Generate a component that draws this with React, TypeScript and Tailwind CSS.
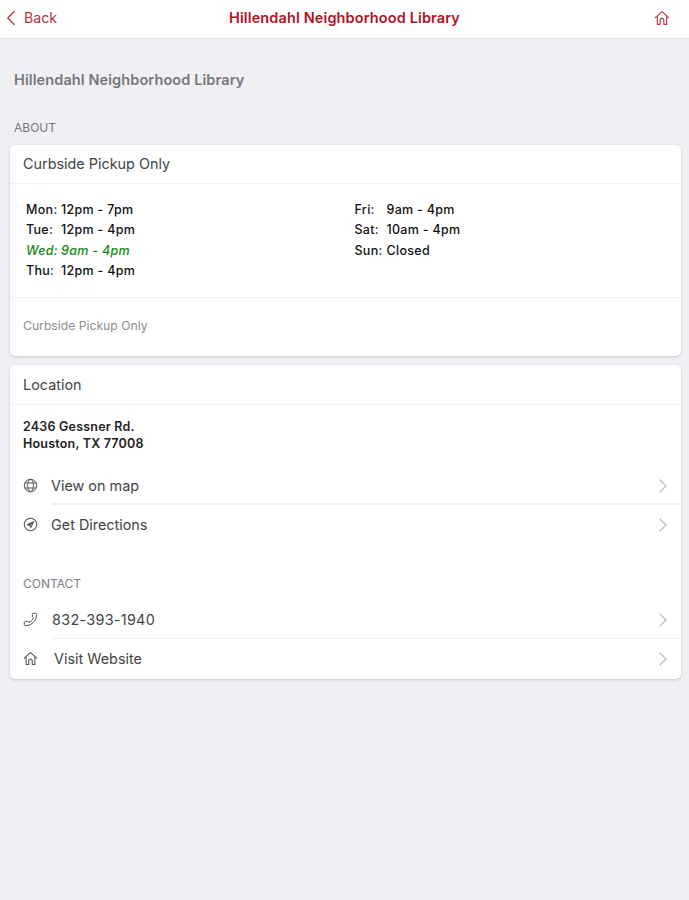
import { ChevronLeft, ChevronRight, Phone } from "lucide-react";

const leftHours = [
  { day: "Mon:", time: "12pm - 7pm" },
  { day: "Tue:", time: "12pm - 4pm" },
  { day: "Wed:", time: "9am - 4pm", today: true },
  { day: "Thu:", time: "12pm - 4pm" },
];

const rightHours = [
  { day: "Fri:", time: "9am - 4pm" },
  { day: "Sat:", time: "10am - 4pm" },
  { day: "Sun:", time: "Closed" },
];

function HomeIcon({ className }: { className?: string }) {
  return (
    <svg className={className} viewBox="0 0 24 24" fill="none" stroke="currentColor" strokeWidth="1.8" strokeLinejoin="round" strokeLinecap="round">
      <path d="M2 11.5 L12 2.5 L22 11.5" />
      <path d="M5 9.5 V21.5 H9.2 V15.5 a2.8 2.8 0 0 1 5.6 0 V21.5 H19 V9.5" />
    </svg>
  );
}

function GlobeIcon({ className }: { className?: string }) {
  return (
    <svg className={className} viewBox="0 0 24 24" fill="none" stroke="currentColor" strokeWidth="1.6">
      <circle cx="12" cy="12" r="10" />
      <ellipse cx="12" cy="12" rx="4.6" ry="10" />
      <path d="M3 8 H21 M3 16 H21" />
    </svg>
  );
}

function DirectionsIcon({ className }: { className?: string }) {
  return (
    <svg className={className} viewBox="0 0 24 24" fill="none" stroke="currentColor" strokeWidth="1.7">
      <circle cx="12" cy="12" r="10" />
      <path d="M17 7.5 L7 12.2 L11 13.2 L12.5 17 Z" strokeLinejoin="round" />
      <path d="M15.5 8.5 L8.5 12 L11.5 12.8 Z" fill="currentColor" />
    </svg>
  );
}

function HoursRow({ day, time, today, dayWidth }: { day: string; time: string; today?: boolean; dayWidth: string }) {
  return (
    <div className={`flex h-[20.5px] items-center text-[12.5px] font-medium tracking-[0.3px] ${today ? "italic text-[#138a13]" : "text-[#111]"}`}>
      <span className={dayWidth}>{day}</span>
      <span>{time}</span>
    </div>
  );
}

function LinkRow({ icon, label, textClass, divider }: { icon: React.ReactNode; label: string; textClass: string; divider?: string }) {
  return (
    <div className="relative flex h-[39px] items-center pl-[13px] pr-[6px]">
      <div className="flex w-[28px] shrink-0 items-center text-[#555]">{icon}</div>
      <span className={`text-[14.4px] text-[#444] ${textClass}`}>{label}</span>
      <ChevronRight size={24} strokeWidth={1.2} className="ml-auto text-[#bcbcc0]" />
      {divider && <div className={`absolute bottom-0 left-[42px] right-0 bg-[#f0f0f3] ${divider}`} />}
    </div>
  );
}

export default function App() {
  return (
    <div className="min-h-[900px] bg-[#efeff4] font-['Inter',sans-serif]">
      {/* Nav bar */}
      <div className="relative flex h-[39px] items-center justify-center border-b border-[#e4e4e8] bg-white pb-[3px]">
        <div className="absolute left-[-2px] top-[5px] flex items-center text-[#b8323c]">
          <ChevronLeft size={26} strokeWidth={1.2} />
          <span className="text-[14.2px]">Back</span>
        </div>
        <span className="text-[14.5px] font-semibold tracking-[0.12px] text-[#b3121f]">Hillendahl Neighborhood Library</span>
        <HomeIcon className="absolute right-[19px] top-[10px] h-[16px] w-[16px] text-[#b8404a]" />
      </div>

      <div className="px-[14px] pt-[32px] text-[14.5px] font-semibold leading-[18px] tracking-[0.1px] text-[#77777c]">
        Hillendahl Neighborhood Library
      </div>
      <div className="px-[14px] pt-[31px] text-[12px] leading-[16px] text-[#77777c]">ABOUT</div>

      {/* Hours card */}
      <div className="ml-[10px] mr-[8px] mt-[9px] rounded-[5px] bg-white shadow-[0_1px_3px_rgba(0,0,0,0.18)]">
        <div className="flex h-[39px] items-center border-b border-[#f3f3f5] pb-[1px] pl-[13px] text-[14.4px] text-[#444]">
          Curbside Pickup Only
        </div>
        <div className="grid grid-cols-2 pb-[15px] pl-[16px] pt-[16px]">
          <div>
            {leftHours.map((h) => (
              <HoursRow key={h.day} {...h} dayWidth="w-[35px]" />
            ))}
          </div>
          <div className="pl-[1px]">
            {rightHours.map((h) => (
              <HoursRow key={h.day} {...h} dayWidth="w-[32px]" />
            ))}
          </div>
        </div>
        <div className="flex h-[59px] items-center border-t border-[#f3f3f5] pb-[2px] pl-[13px] text-[12.2px] text-[#8c8c90]">
          Curbside Pickup Only
        </div>
      </div>

      {/* Location + contact card */}
      <div className="ml-[10px] mr-[8px] mt-[9px] rounded-[5px] bg-white pb-[1px] shadow-[0_1px_3px_rgba(0,0,0,0.18)]">
        <div className="flex h-[40px] items-center border-b border-[#f3f3f5] pl-[13px] text-[14.4px] text-[#444]">
          Location
        </div>
        <div className="pl-[13px] pt-[13px] text-[12.5px] font-semibold leading-[17px] tracking-[0.2px] text-[#222]">
          <div>2436 Gessner Rd.</div>
          <div>Houston, TX 77008</div>
        </div>
        <div className="pt-[14px]">
          <LinkRow icon={<GlobeIcon className="h-[15px] w-[15px]" />} label="View on map" textClass="" divider="h-[2px]" />
          <LinkRow icon={<DirectionsIcon className="h-[15px] w-[15px]" />} label="Get Directions" textClass="" />
        </div>
        <div className="pl-[13px] pt-[32px] text-[12px] leading-[16px] text-[#7d7d82]">CONTACT</div>
        <div className="pt-[8px]">
          <LinkRow icon={<Phone size={15} strokeWidth={1.6} className="-scale-x-100" />} label="832-393-1940" textClass="tracking-[0.3px] ml-[1px]" divider="h-px" />
          <LinkRow icon={<HomeIcon className="h-[15px] w-[15px]" />} label="Visit Website" textClass="ml-[3px]" />
        </div>
      </div>
    </div>
  );
}
